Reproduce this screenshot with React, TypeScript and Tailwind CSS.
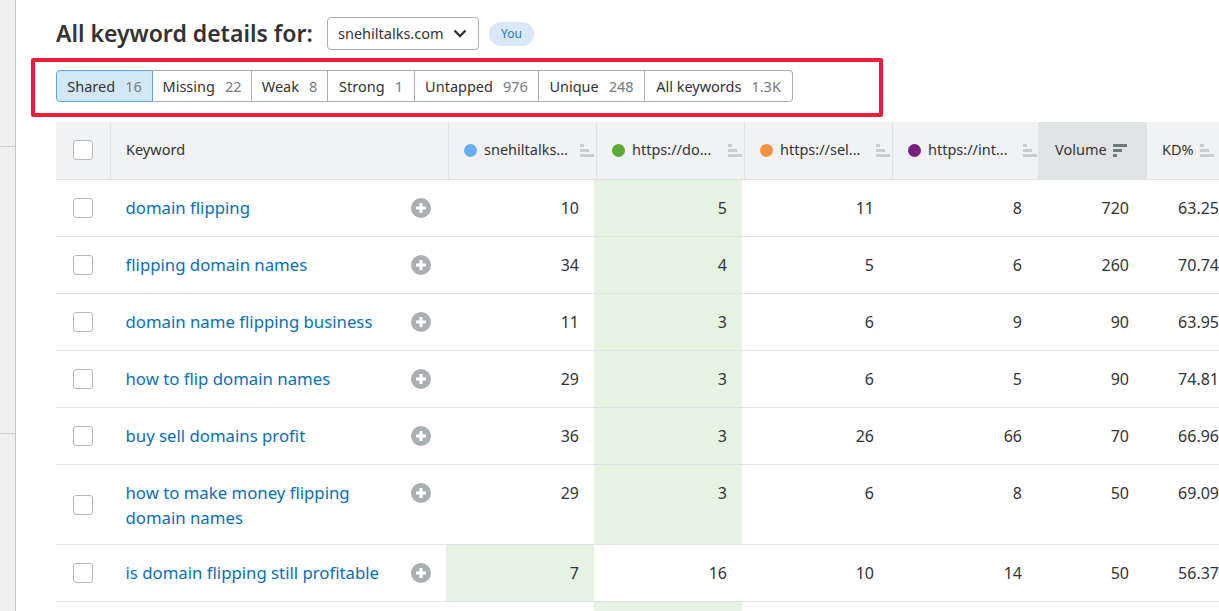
const tabs = [
  { label: 'Shared', count: '16', width: 'w-[97px]' },
  { label: 'Missing', count: '22', width: 'w-[99px]' },
  { label: 'Weak', count: '8', width: 'w-[76px]' },
  { label: 'Strong', count: '1', width: 'w-[87px]' },
  { label: 'Untapped', count: '976', width: 'w-[124px]' },
  { label: 'Unique', count: '248', width: 'w-[106px]' },
  { label: 'All keywords', count: '1.3K', width: 'w-[148px]' },
];

const competitors = [
  { name: 'snehiltalks...', dot: 'bg-[#66aef2]', width: 'w-[148px]' },
  { name: 'https://do...', dot: 'bg-[#5dab33]', width: 'w-[148px]' },
  { name: 'https://sel...', dot: 'bg-[#f5923e]', width: 'w-[148px]' },
  { name: 'https://int...', dot: 'bg-[#7b1f7f]', width: 'w-[146px]' },
];

const rows = [
  { keyword: 'domain flipping', pos: ['10', '5', '11', '8'], best: 1, volume: '720', kd: '63.25' },
  { keyword: 'flipping domain names', pos: ['34', '4', '5', '6'], best: 1, volume: '260', kd: '70.74' },
  { keyword: 'domain name flipping business', pos: ['11', '3', '6', '9'], best: 1, volume: '90', kd: '63.95' },
  { keyword: 'how to flip domain names', pos: ['29', '3', '6', '5'], best: 1, volume: '90', kd: '74.81' },
  { keyword: 'buy sell domains profit', pos: ['36', '3', '26', '66'], best: 1, volume: '70', kd: '66.96' },
  { keyword: 'how to make money flipping domain names', pos: ['29', '3', '6', '8'], best: 1, volume: '50', kd: '69.09', tall: true },
  { keyword: 'is domain flipping still profitable', pos: ['7', '16', '10', '14'], best: 0, volume: '50', kd: '56.37' },
];

const bodyCols = ['w-[148px] pr-[15px]', 'w-[148px] pr-[15px]', 'w-[148px] pr-[16px]', 'w-[149px] pr-[17px]'];

const SortIcon = ({ dark }: { dark?: boolean }) => (
  <svg width="15" height="14" viewBox="0 0 15 14" className={`shrink-0 ${dark ? 'text-[#6b7880]' : 'text-[#c7cdd0]'}`} fill="currentColor">
    {dark ? (
      <>
        <rect x="0" y="1" width="14" height="3" />
        <rect x="0" y="6" width="9" height="3" />
        <rect x="0" y="11" width="4" height="3" />
      </>
    ) : (
      <>
        <rect x="0" y="1" width="4" height="3" />
        <rect x="0" y="6" width="9" height="3" />
        <rect x="0" y="11" width="14" height="3" />
      </>
    )}
  </svg>
);

const PlusIcon = () => (
  <svg width="20" height="20" viewBox="0 0 20 20" className="shrink-0">
    <circle cx="10" cy="10" r="10" fill="#a8b0b3" />
    <path d="M10 5v10M5 10h10" stroke="#fff" strokeWidth="3" />
  </svg>
);

const Checkbox = () => <div className="w-[20px] h-[20px] rounded-[3px] border border-[#b3b9bc] bg-white" />;

export default function App() {
  return (
    <div className="flex w-[1219px] h-[611px] overflow-hidden bg-white text-[#333] font-['Noto_Sans',sans-serif]">
      <div className="w-[16px] shrink-0 bg-[#efefef] border-r border-[#c4c7c8]">
        <div className="h-[147px] border-b border-[#c9cbcc]" />
        <div className="h-[287px] border-b border-[#c9cbcc]" />
      </div>

      <div className="flex-1 min-w-0 pl-[15px]">
        <div className="flex items-center h-[58px] pl-[25px] pt-[9px]">
          <h1 className="text-[23px] font-semibold leading-none pb-[1px] text-[#333] w-[271px] whitespace-nowrap">All keyword details for:</h1>
          <div className="flex items-center justify-between w-[152px] h-[33px] pl-[10px] pr-[11px] border border-[#a8b0b3] rounded-[4px] text-[14.5px]">
            snehiltalks.com
            <svg width="14" height="10" viewBox="0 0 14 10" fill="none" stroke="#333" strokeWidth="2.4" className="shrink-0">
              <path d="M1.5 1.5 7 7l5.5-5.5" />
            </svg>
          </div>
          <span className="ml-[10px] flex items-center justify-center w-[45px] h-[24px] rounded-full bg-[#d9e8f4] text-[12px] text-[#1a78bd]">You</span>
        </div>

        <div className="w-[852px] h-[59px] border-[4px] border-[#ee1c3b] rounded-[2px] flex items-center pl-[21px] pb-[3px]">
          <div className="flex h-[32px] text-[14.5px]">
            {tabs.map((tab, i) => (
              <div
                key={tab.label}
                className={`${tab.width} flex items-center justify-center gap-[10px] pt-[1px] border whitespace-nowrap ${
                  i === 0
                    ? 'bg-[#d3e8f7] border-[#5ba6e0] rounded-l-[4px]'
                    : 'border-[#a8b0b3] border-l-0'
                } ${i === tabs.length - 1 ? 'rounded-r-[4px]' : ''}`}
              >
                <span>{tab.label}</span>
                <span className="text-[#757b7e]">{tab.count}</span>
              </div>
            ))}
          </div>
        </div>

        <div className="ml-[25px] mt-[5px] w-[1163px] text-[14.5px]">
          <div className="flex h-[58px] bg-[#f1f2f4] border-b border-[#dfe3e5]">
            <div className="w-[55px] shrink-0 flex items-center justify-center pr-[1px] pb-[1px] border-r border-[#e0e3e5]">
              <Checkbox />
            </div>
            <div className="w-[338px] shrink-0 flex items-center pl-[15px] pb-[1px] border-r border-[#e0e3e5]">Keyword</div>
            {competitors.map((c) => (
              <div key={c.name} className={`${c.width} shrink-0 flex items-center pl-[15px] pb-[1px] border-r border-[#e0e3e5] last:border-r-0`}>
                <span className={`w-[13px] h-[13px] shrink-0 rounded-full ${c.dot}`} />
                <span className="ml-[7px] w-[96px] whitespace-nowrap overflow-hidden">{c.name}</span>
                <SortIcon />
              </div>
            ))}
            <div className="w-[108px] shrink-0 flex items-center pl-[16px] pb-[1px] gap-[6px] bg-[#e1e4e5]">
              Volume
              <SortIcon dark />
            </div>
            <div className="flex-1 flex items-center pl-[15px] pb-[1px] gap-[6px]">
              KD%
              <SortIcon />
            </div>
          </div>

          {rows.map((row) => (
            <div key={row.keyword} className={`flex border-b border-[#dfe3e5] text-[16px] ${row.tall ? 'h-[80px]' : 'h-[57px]'}`}>
              <div className="w-[55px] shrink-0 flex items-center justify-center pr-[1px]">
                <Checkbox />
              </div>
              <div className="w-[335px] shrink-0 flex justify-between pl-[14.5px] pr-[15px] pt-[15px]">
                <a className={`text-[#0a6fb8] text-[16.75px] leading-[25px] ${row.tall ? 'w-[260px]' : 'whitespace-nowrap'}`}>{row.keyword}</a>
                <div className="pt-[3px]">
                  <PlusIcon />
                </div>
              </div>
              {row.pos.map((p, i) => (
                <div
                  key={i}
                  className={`${bodyCols[i]} shrink-0 text-right pt-[16px] leading-[25px] ${i === row.best ? 'bg-[#e6f2e2]' : ''}`}
                >
                  {p}
                </div>
              ))}
              <div className="w-[107px] shrink-0 text-right pr-[17px] pt-[16px] leading-[25px]">{row.volume}</div>
              <div className="flex-1 text-right pt-[16px] leading-[25px] whitespace-nowrap">{row.kd}</div>
            </div>
          ))}

          <div className="flex h-[20px]">
            <div className="w-[538px] shrink-0" />
            <div className="w-[148px] bg-[#e6f2e2]" />
          </div>
        </div>
      </div>
    </div>
  );
}
